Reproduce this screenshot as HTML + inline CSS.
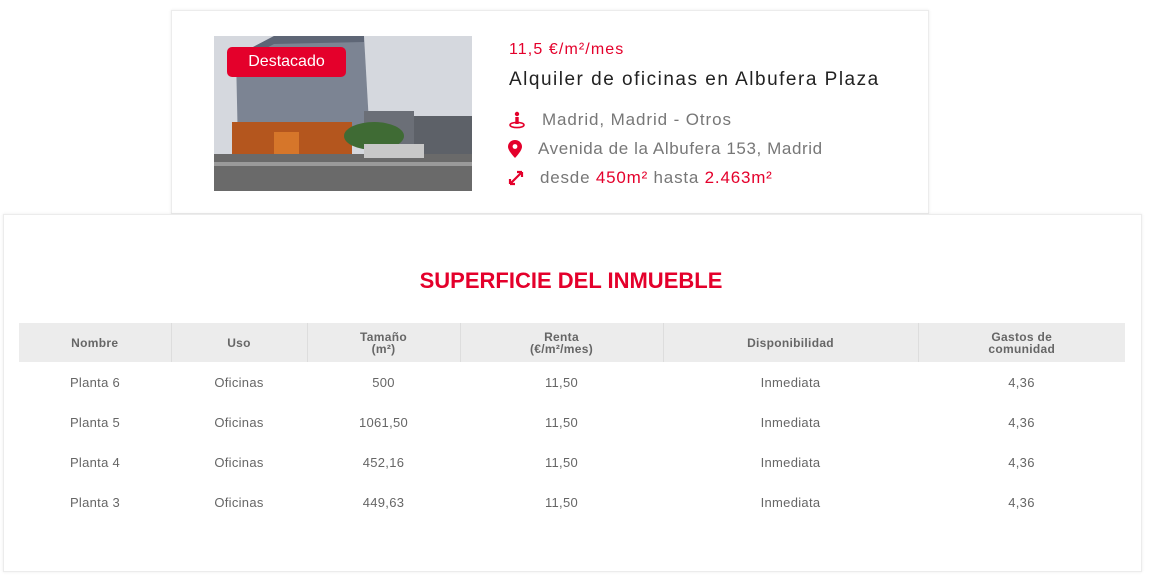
<!DOCTYPE html>
<html><head><meta charset="utf-8"><style>
*{margin:0;padding:0;box-sizing:border-box}
body{width:1152px;height:576px;background:#fff;font-family:"Liberation Sans",sans-serif;position:relative;overflow:hidden}
.card1{position:absolute;left:171px;top:10px;width:758px;height:204px;border:1px solid #ececec;box-shadow:0 0 3px rgba(0,0,0,.08);background:#fff}
.img{position:absolute;left:214px;top:36px;width:258px;height:155px;overflow:hidden;background:linear-gradient(#dfe2e8,#c9ccd3 60%,#8b8b8b 75%,#6d6d6d)}
.badge{position:absolute;left:227px;top:47px;width:119px;height:30px;background:#e4002b;border-radius:5px;color:#fff;font-size:16px;line-height:30px;text-align:center}
.red{color:#e4002b}
.t{position:absolute;white-space:nowrap}
.card2{position:absolute;left:3px;top:214px;width:1139px;height:358px;border:1px solid #ececec;box-shadow:0 0 3px rgba(0,0,0,.08);background:#fff}
table{position:absolute;left:19px;top:323px;width:1106px;border-collapse:collapse;font-size:13px;color:#666;letter-spacing:0.3px}
th{background:#ececec;height:39px;font-weight:bold;color:#666;font-size:12px;line-height:12px;border-left:1px solid #ddd}
th:first-child{border-left:none}
td{height:40px;text-align:center}
</style></head><body>
<div class="card1"></div>
<div class="img">
<svg width="258" height="155" viewBox="0 0 258 155">
<rect x="0" y="0" width="258" height="155" fill="#d5d8de"/>
<polygon points="22,20 60,0 150,0 156,105 24,112" fill="#7c8493"/>
<polygon points="22,20 60,0 150,0 150,6 60,8 26,26" fill="#5e6676"/>
<rect x="150" y="75" width="50" height="45" fill="#6b6f77"/>
<rect x="200" y="80" width="58" height="45" fill="#5d6168"/>
<rect x="18" y="86" width="120" height="40" fill="#b4561e"/>
<rect x="60" y="96" width="25" height="32" fill="#d6762a"/>
<ellipse cx="160" cy="100" rx="30" ry="14" fill="#3f6b34"/>
<rect x="0" y="118" width="258" height="37" fill="#6a6a6a"/>
<rect x="0" y="126" width="258" height="4" fill="#9a9a9a"/>
<rect x="150" y="108" width="60" height="14" fill="#c8c8c8"/>
</svg></div>
<div class="badge">Destacado</div>
<div class="t red" style="left:509px;top:41px;font-size:16px;letter-spacing:1.1px">11,5 €/m²/mes</div>
<div class="t" style="left:509px;top:69px;font-size:19px;color:#222;letter-spacing:1.5px">Alquiler de oficinas en Albufera Plaza</div>
<svg class="t" style="left:508px;top:111px" width="18" height="18" viewBox="0 0 18 18"><circle cx="9" cy="3" r="2.2" fill="#e4002b"/><rect x="7.3" y="6" width="3.4" height="7" fill="#e4002b"/><ellipse cx="9" cy="14" rx="7" ry="2.6" fill="none" stroke="#e4002b" stroke-width="1.6"/></svg>
<div class="t" style="left:542px;top:110px;font-size:17px;color:#777;letter-spacing:0.9px">Madrid, Madrid - Otros</div>
<svg class="t" style="left:508px;top:140px" width="14" height="18" viewBox="0 0 14 18"><path d="M7 0C3 0 0 3 0 6.8 0 11 7 18 7 18S14 11 14 6.8C14 3 11 0 7 0z" fill="#e4002b"/><circle cx="7" cy="6.5" r="2.4" fill="#fff"/></svg>
<div class="t" style="left:538px;top:139px;font-size:17px;color:#777;letter-spacing:0.6px">Avenida de la Albufera 153, Madrid</div>
<svg class="t" style="left:508px;top:170px" width="16" height="16" viewBox="0 0 16 16"><path d="M2 14L14 2M2 14v-5M2 14h5M14 2h-5M14 2v5" stroke="#e4002b" stroke-width="2.2" fill="none"/></svg>
<div class="t" style="left:540px;top:168px;font-size:17px;color:#777;letter-spacing:0.8px">desde <span class="red">450m²</span> hasta <span class="red">2.463m²</span></div>
<div class="card2"></div>
<div class="t red" style="left:0;width:1142px;text-align:center;top:268px;font-size:22px;font-weight:bold">SUPERFICIE DEL INMUEBLE</div>
<table>
<colgroup><col style="width:152px"><col style="width:136px"><col style="width:153px"><col style="width:203px"><col style="width:255px"><col></colgroup>
<tr><th>Nombre</th><th>Uso</th><th>Tamaño<br>(m²)</th><th>Renta<br>(€/m²/mes)</th><th>Disponibilidad</th><th>Gastos de<br>comunidad</th></tr>
<tr><td>Planta 6</td><td>Oficinas</td><td>500</td><td>11,50</td><td>Inmediata</td><td>4,36</td></tr>
<tr><td>Planta 5</td><td>Oficinas</td><td>1061,50</td><td>11,50</td><td>Inmediata</td><td>4,36</td></tr>
<tr><td>Planta 4</td><td>Oficinas</td><td>452,16</td><td>11,50</td><td>Inmediata</td><td>4,36</td></tr>
<tr><td>Planta 3</td><td>Oficinas</td><td>449,63</td><td>11,50</td><td>Inmediata</td><td>4,36</td></tr>
</table>
</body></html>
